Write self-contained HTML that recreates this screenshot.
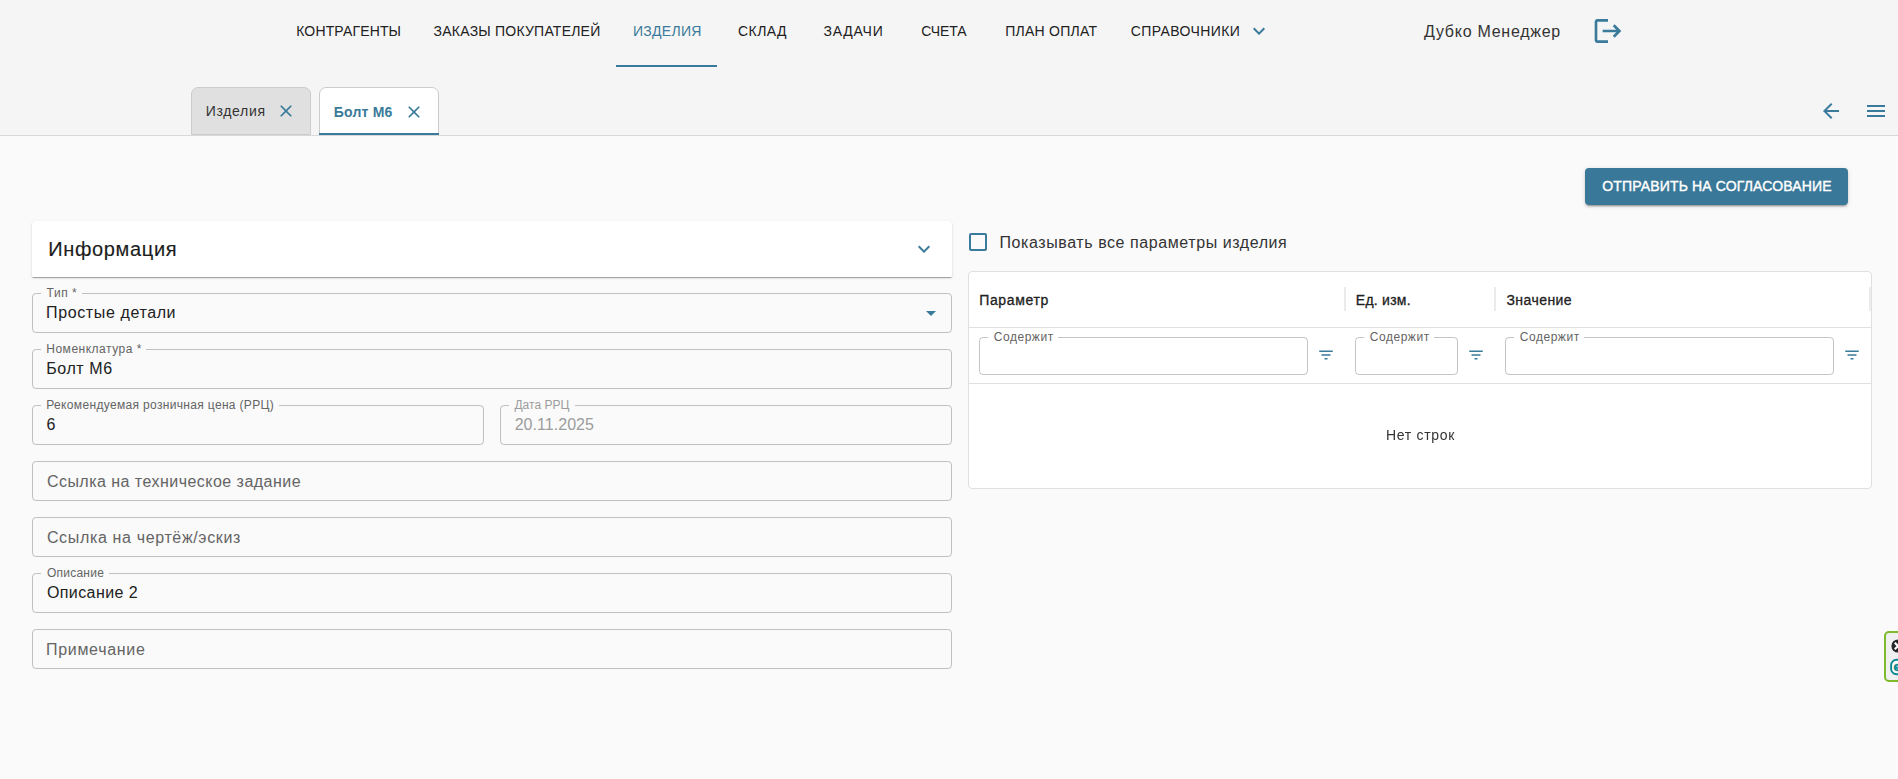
<!DOCTYPE html>
<html lang="ru">
<head>
<meta charset="utf-8">
<title>Болт М6</title>
<style>
html,body{margin:0;padding:0;}
body{width:1898px;height:779px;overflow:hidden;background:#fafafa;font-family:"Liberation Sans",sans-serif;color:#212121;position:relative;}
.abs{position:absolute;}
.t{position:absolute;white-space:nowrap;line-height:1;}
#top{position:absolute;left:0;top:0;width:1898px;height:135px;background:#f5f5f5;border-bottom:1px solid #d8d8d8;}
.tab{position:absolute;top:87px;height:48px;width:120px;box-sizing:border-box;border:1px solid #cccccc;border-radius:7px 7px 0 0;}
.field{position:absolute;box-sizing:border-box;border:1px solid rgba(0,0,0,.23);border-radius:4px;height:40px;}
.notch{position:absolute;height:3px;background:#fafafa;}
.ic{position:absolute;fill:#3a7a9b;}

</style>
</head>
<body>
<div id="top"></div>
<div class="abs" style="left:616px;top:65px;width:101px;height:2px;background:#3a7a9b;"></div>
<svg class="ic" style="left:1247px;top:19px;" width="24" height="24" viewBox="0 0 24 24"><path d="M7.41 8.59 12 13.17l4.59-4.58L18 10l-6 6-6-6 1.41-1.41z"/></svg>
<svg class="ic" style="left:1592px;top:15px;" width="32" height="32" viewBox="0 0 24 24"><path d="m17 7-1.41 1.41L18.17 11H8v2h10.17l-2.58 2.58L17 17l5-5zM4 5h8V3H4c-1.1 0-2 .9-2 2v14c0 1.1.9 2 2 2h8v-2H4V5z"/></svg>

<div class="tab" style="left:191px;background:#e0e0e0;"></div>
<svg class="ic" style="left:276px;top:101px;" width="20" height="20" viewBox="0 0 24 24"><path d="M19 6.41 17.59 5 12 10.59 6.41 5 5 6.41 10.59 12 5 17.59 6.41 19 12 13.41 17.59 19 19 17.59 13.41 12z"/></svg>
<div class="tab" style="left:319px;background:#fff;"></div>
<div class="abs" style="left:319px;top:133px;width:120px;height:2px;background:#3a7a9b;"></div>
<svg class="ic" style="left:404px;top:102px;" width="20" height="20" viewBox="0 0 24 24"><path d="M19 6.41 17.59 5 12 10.59 6.41 5 5 6.41 10.59 12 5 17.59 6.41 19 12 13.41 17.59 19 19 17.59 13.41 12z"/></svg>

<svg class="ic" style="left:1819px;top:99px;" width="24" height="24" viewBox="0 0 24 24"><path d="M20 11H7.83l5.59-5.59L12 4l-8 8 8 8 1.41-1.41L7.83 13H20v-2z"/></svg>
<svg class="ic" style="left:1864px;top:99px;" width="24" height="24" viewBox="0 0 24 24"><path d="M3 18h18v-2H3v2zm0-5h18v-2H3v2zm0-7v2h18V6H3z"/></svg>

<div class="abs" style="left:1585px;top:168px;width:263px;height:37px;background:#3a7899;border-radius:4px;box-shadow:0 3px 1px -2px rgba(0,0,0,.2),0 2px 2px 0 rgba(0,0,0,.14),0 1px 5px 0 rgba(0,0,0,.12);"></div>

<div class="abs" style="left:32px;top:221px;width:920px;height:56px;background:#fff;border-radius:4px 4px 0 0;box-shadow:0 2px 1px -1px rgba(0,0,0,.2),0 1px 1px 0 rgba(0,0,0,.14),0 1px 3px 0 rgba(0,0,0,.12);"></div>
<svg class="ic" style="left:912px;top:237px;" width="24" height="24" viewBox="0 0 24 24"><path d="M7.41 8.59 12 13.17l4.59-4.58L18 10l-6 6-6-6 1.41-1.41z"/></svg>

<div class="field" style="left:32px;top:293px;width:920px;"></div><div class="notch" style="left:41px;top:292px;width:41px;"></div>
<svg class="ic" style="left:919px;top:301px;" width="24" height="24" viewBox="0 0 24 24"><path d="M7 10l5 5 5-5z"/></svg>
<div class="field" style="left:32px;top:349px;width:920px;"></div><div class="notch" style="left:41px;top:348px;width:105px;"></div>
<div class="field" style="left:32px;top:405px;width:452px;"></div><div class="notch" style="left:41px;top:404px;width:238px;"></div>
<div class="field" style="left:500px;top:405px;width:452px;"></div><div class="notch" style="left:509px;top:404px;width:66px;"></div>
<div class="field" style="left:32px;top:461px;width:920px;"></div>
<div class="field" style="left:32px;top:517px;width:920px;"></div>
<div class="field" style="left:32px;top:573px;width:920px;"></div><div class="notch" style="left:41px;top:572px;width:68px;"></div>
<div class="field" style="left:32px;top:629px;width:920px;"></div>

<div class="abs" style="left:969px;top:233px;width:18px;height:18px;box-sizing:border-box;border:2px solid #3a7a9b;border-radius:2px;"></div>

<div class="abs" style="left:968px;top:271px;width:904px;height:218px;box-sizing:border-box;border:1px solid #e0e0e0;border-radius:4px;background:#fff;"></div>
<div class="abs" style="left:969px;top:327px;width:902px;height:1px;background:#e0e0e0;"></div>
<div class="abs" style="left:969px;top:383px;width:902px;height:1px;background:#e0e0e0;"></div>
<div class="abs" style="left:1344px;top:287px;width:2px;height:24px;background:#ebebeb;"></div>
<div class="abs" style="left:1494px;top:287px;width:2px;height:24px;background:#ebebeb;"></div>
<div class="abs" style="left:1869px;top:287px;width:2px;height:24px;background:#ebebeb;"></div>

<div class="field" style="left:979px;top:337px;width:329px;height:38px;"></div><div class="notch" style="left:988px;top:336px;width:70px;background:#fff;"></div>
<div class="field" style="left:1355px;top:337px;width:103px;height:38px;"></div><div class="notch" style="left:1364px;top:336px;width:70px;background:#fff;"></div>
<div class="field" style="left:1505px;top:337px;width:329px;height:38px;"></div><div class="notch" style="left:1514px;top:336px;width:70px;background:#fff;"></div>
<svg class="ic" style="left:1317px;top:346px;" width="18" height="18" viewBox="0 0 24 24"><path d="M10 18h4v-2h-4v2zM3 6v2h18V6H3zm3 7h12v-2H6v2z"/></svg>
<svg class="ic" style="left:1467px;top:346px;" width="18" height="18" viewBox="0 0 24 24"><path d="M10 18h4v-2h-4v2zM3 6v2h18V6H3zm3 7h12v-2H6v2z"/></svg>
<svg class="ic" style="left:1843px;top:346px;" width="18" height="18" viewBox="0 0 24 24"><path d="M10 18h4v-2h-4v2zM3 6v2h18V6H3zm3 7h12v-2H6v2z"/></svg>

<div class="abs" style="left:1884px;top:631px;width:24px;height:51px;box-sizing:border-box;border:2px solid #7dbb2b;border-radius:5px;background:#f0f0f0;"></div>
<svg class="abs" style="left:1890px;top:638px;" width="16" height="16" viewBox="0 0 16 16"><circle cx="8" cy="8" r="6.6" fill="#23282d"/><path d="M4.8 4.8 L11.2 11.2 M11.2 4.8 L4.8 11.2" stroke="#fff" stroke-width="2.2" fill="none"/></svg>
<svg class="abs" style="left:1889px;top:658px;" width="20" height="18" viewBox="0 0 20 18"><rect x="2.1" y="1.8" width="18" height="14.4" rx="5.5" ry="5.5" fill="#fff" stroke="#0b8894" stroke-width="1.9"/><text x="4.6" y="13.2" font-family="Liberation Sans, sans-serif" font-weight="bold" font-size="13.5" stroke="#0b8894" stroke-width="0.5" fill="#0b8894">e</text></svg>

<span class="t" id="n1" style="left:296.22px;top:24px;font-size:14px;color:#212121;letter-spacing:0.150px;">КОНТРАГЕНТЫ</span>
<span class="t" id="n2" style="left:433.61px;top:24px;font-size:14px;color:#212121;letter-spacing:0.225px;">ЗАКАЗЫ ПОКУПАТЕЛЕЙ</span>
<span class="t" id="n3" style="left:632.98px;top:24px;font-size:14px;color:#3a7a9b;letter-spacing:0.295px;">ИЗДЕЛИЯ</span>
<span class="t" id="n4" style="left:738.00px;top:24px;font-size:14px;color:#212121;letter-spacing:0.445px;">СКЛАД</span>
<span class="t" id="n5" style="left:823.61px;top:24px;font-size:14px;color:#212121;letter-spacing:0.747px;">ЗАДАЧИ</span>
<span class="t" id="n6" style="left:921.34px;top:24px;font-size:14px;color:#212121;letter-spacing:-0.102px;">СЧЕТА</span>
<span class="t" id="n7" style="left:1005.14px;top:24px;font-size:14px;color:#212121;letter-spacing:0.271px;">ПЛАН ОПЛАТ</span>
<span class="t" id="n8" style="left:1130.75px;top:24px;font-size:14px;color:#212121;letter-spacing:0.394px;">СПРАВОЧНИКИ</span>
<span class="t" id="usr" style="left:1424.01px;top:24px;font-size:16px;color:#333333;letter-spacing:0.731px;">Дубко Менеджер</span>
<span class="t" id="tb1" style="left:205.72px;top:104px;font-size:14px;color:#333333;letter-spacing:0.672px;">Изделия</span>
<span class="t" id="tb2" style="left:333.84px;top:105px;font-size:14px;color:#3a7a9b;letter-spacing:0.198px;font-weight:bold;">Болт М6</span>
<span class="t" id="btn" style="left:1602.27px;top:179px;font-size:14px;color:#ffffff;letter-spacing:0.149px;-webkit-text-stroke:0.4px;">ОТПРАВИТЬ НА СОГЛАСОВАНИЕ</span>
<span class="t" id="inf" style="left:48.18px;top:239px;font-size:20px;color:#1c1c1c;letter-spacing:0.666px;-webkit-text-stroke:0.15px;">Информация</span>
<span class="t" id="l1" style="left:46.61px;top:287px;font-size:12px;color:#646464;letter-spacing:0.512px;">Тип *</span>
<span class="t" id="v1" style="left:46.10px;top:305px;font-size:16px;color:#212121;letter-spacing:0.611px;">Простые детали</span>
<span class="t" id="l2" style="left:46.28px;top:343px;font-size:12px;color:#646464;letter-spacing:0.509px;">Номенклатура *</span>
<span class="t" id="v2" style="left:46.13px;top:361px;font-size:16px;color:#212121;letter-spacing:0.606px;">Болт М6</span>
<span class="t" id="l3" style="left:46.28px;top:399px;font-size:12px;color:#646464;letter-spacing:0.336px;">Рекомендуемая розничная цена (РРЦ)</span>
<span class="t" id="v3" style="left:46.44px;top:417px;font-size:16px;color:#212121;letter-spacing:2.037px;">6</span>
<span class="t" id="l4" style="left:514.44px;top:399px;font-size:12px;color:#9c9c9c;letter-spacing:0.028px;">Дата РРЦ</span>
<span class="t" id="v4" style="left:514.68px;top:417px;font-size:16px;color:#9c9c9c;letter-spacing:0.038px;">20.11.2025</span>
<span class="t" id="p5" style="left:46.91px;top:474px;font-size:16px;color:#646464;letter-spacing:0.468px;">Ссылка на техническое задание</span>
<span class="t" id="p6" style="left:46.91px;top:530px;font-size:16px;color:#646464;letter-spacing:0.649px;">Ссылка на чертёж/эскиз</span>
<span class="t" id="l7" style="left:46.92px;top:567px;font-size:12px;color:#646464;letter-spacing:0.245px;">Описание</span>
<span class="t" id="v7" style="left:46.96px;top:585px;font-size:16px;color:#212121;letter-spacing:0.404px;">Описание 2</span>
<span class="t" id="p8" style="left:45.96px;top:642px;font-size:16px;color:#646464;letter-spacing:0.696px;">Примечание</span>
<span class="t" id="chk" style="left:999.56px;top:235px;font-size:16px;color:#333333;letter-spacing:0.574px;">Показывать все параметры изделия</span>
<span class="t" id="h1" style="left:979.17px;top:293px;font-size:14px;color:#212121;letter-spacing:0.664px;-webkit-text-stroke:0.3px;">Параметр</span>
<span class="t" id="h2" style="left:1355.81px;top:293px;font-size:14px;color:#212121;letter-spacing:0.255px;-webkit-text-stroke:0.3px;">Ед. изм.</span>
<span class="t" id="h3" style="left:1506.38px;top:293px;font-size:14px;color:#212121;letter-spacing:0.457px;-webkit-text-stroke:0.3px;">Значение</span>
<span class="t" id="f1" style="left:993.84px;top:331px;font-size:12px;color:#646464;letter-spacing:0.524px;">Содержит</span>
<span class="t" id="f2" style="left:1369.84px;top:331px;font-size:12px;color:#646464;letter-spacing:0.524px;">Содержит</span>
<span class="t" id="f3" style="left:1519.84px;top:331px;font-size:12px;color:#646464;letter-spacing:0.524px;">Содержит</span>
<span class="t" id="nr" style="left:1386.20px;top:428px;font-size:14px;color:#333333;letter-spacing:0.696px;will-change:transform;">Нет строк</span>
</body>
</html>
